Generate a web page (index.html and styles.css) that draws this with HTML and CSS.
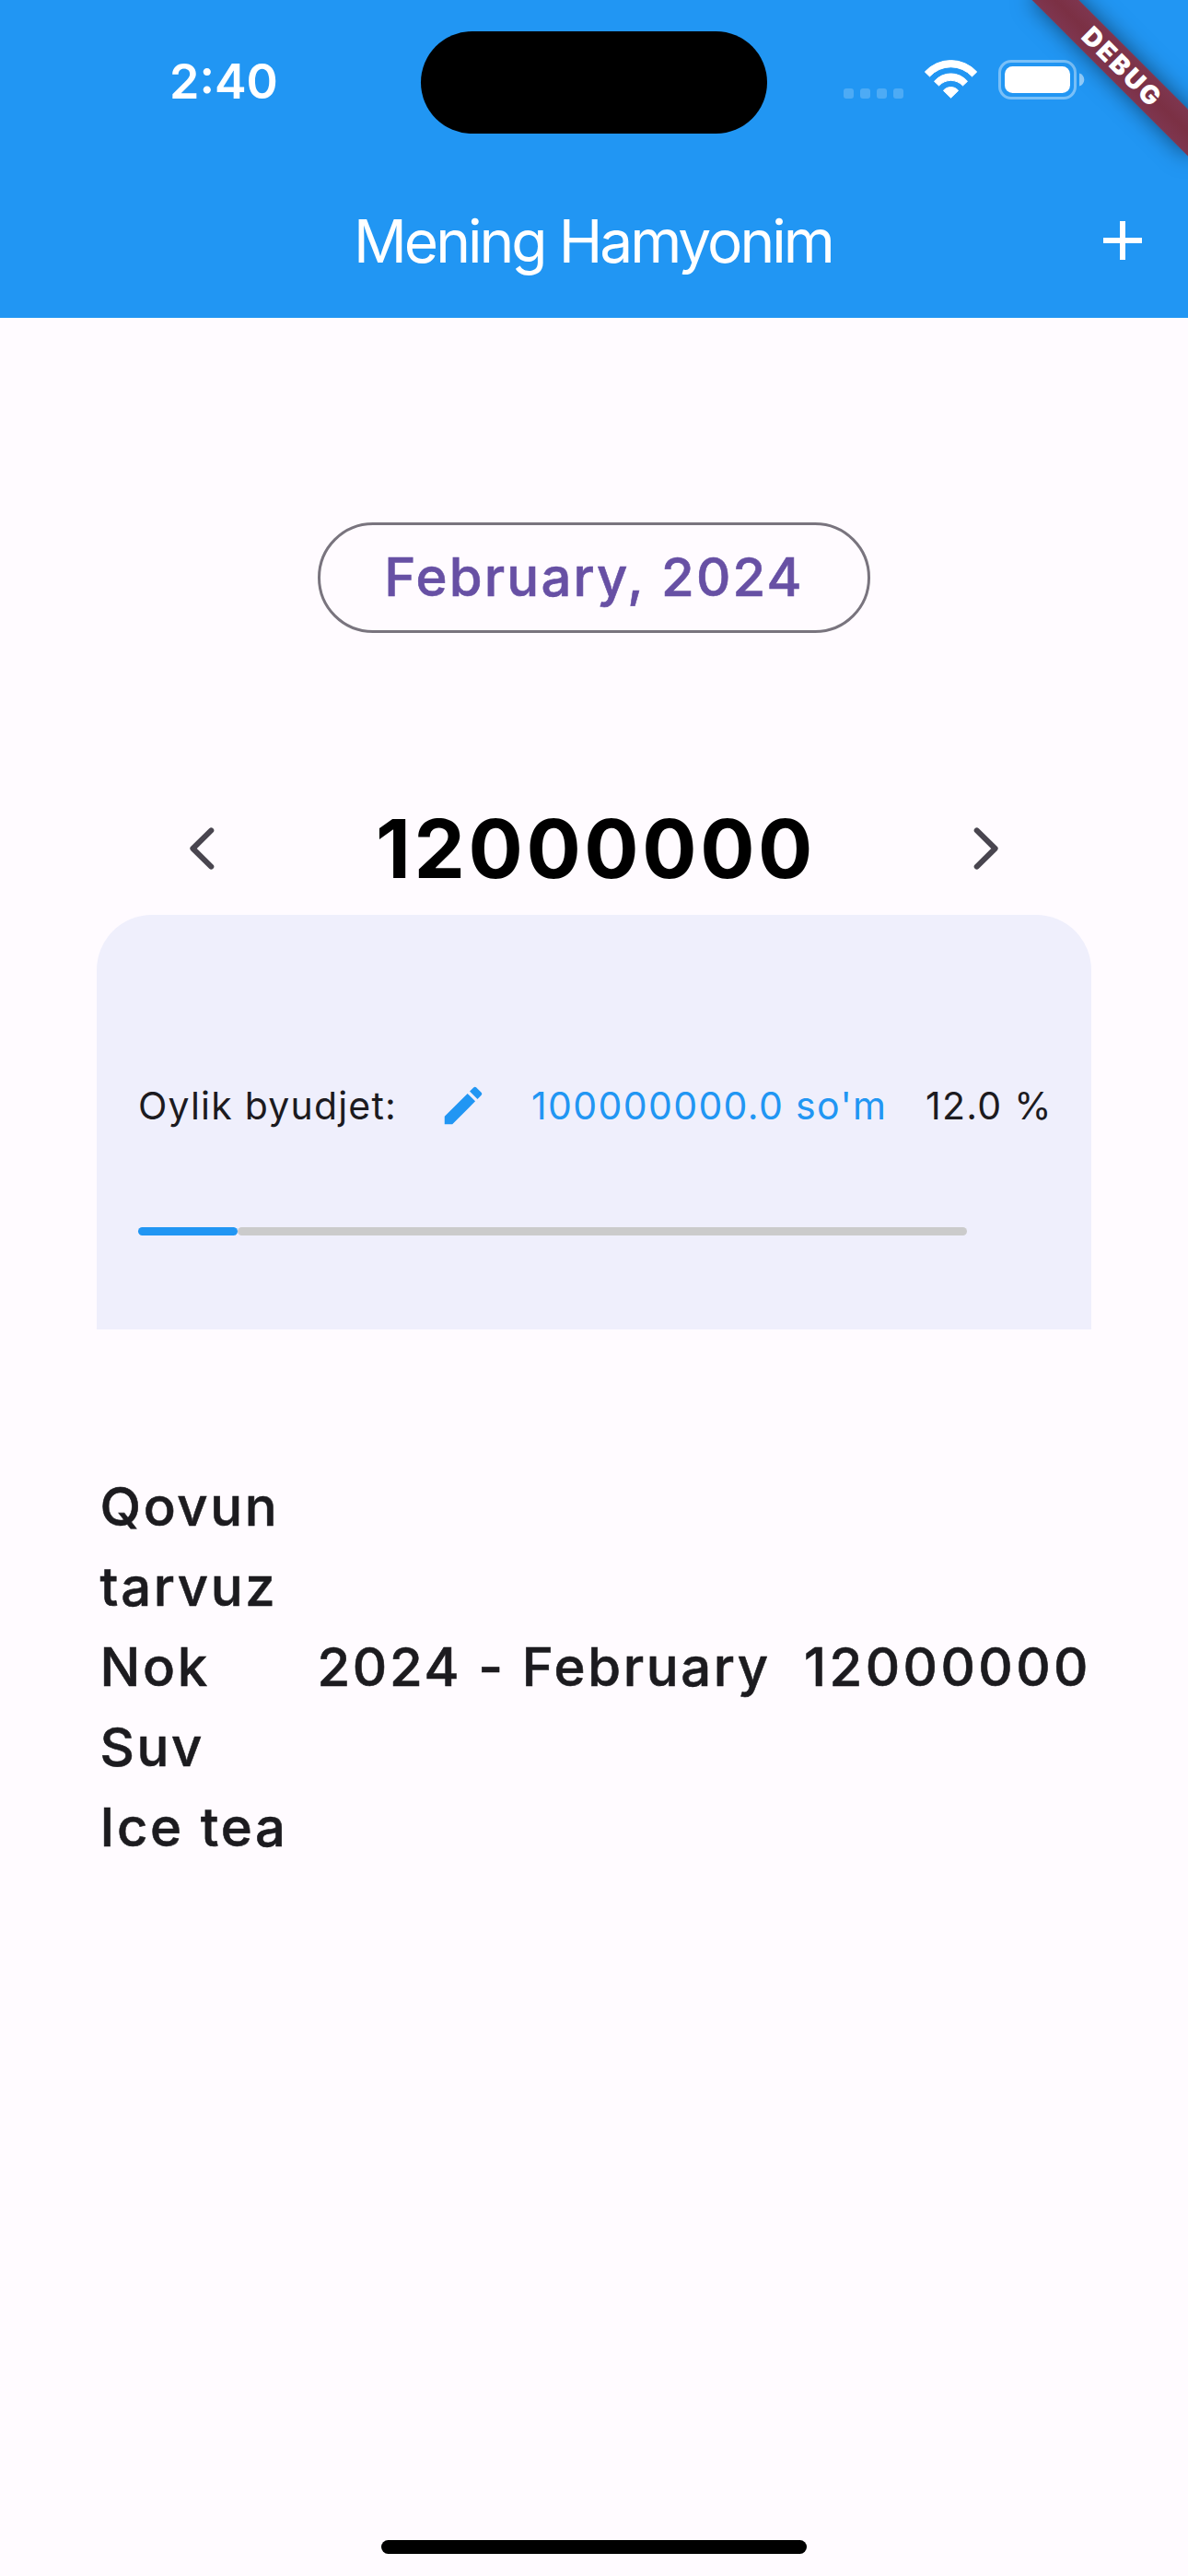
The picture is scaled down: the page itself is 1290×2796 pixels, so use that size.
FILE: index.html
```html
<!DOCTYPE html>
<html lang="uz">
<head>
<meta charset="utf-8">
<title>Mening Hamyonim</title>
<link rel="stylesheet" href="styles.css">
</head>
<body>
<div class="screen">
  <header class="header">
    <div class="status">
      <span class="time">2:40</span>
      <span class="island"></span>
      <span class="signal"><i></i><i></i><i></i><i></i></span>
      <svg class="wifi" width="60" height="44" viewBox="0 0 60 44" fill="#fff" stroke="#fff" stroke-width="1" stroke-linejoin="round">
        <path d="M1.3 14A38.2 38.2 0 0 1 57.7 14L52.5 19A31 31 0 0 0 6.5 19Z"/>
        <path d="M11.5 24.3A23.5 23.5 0 0 1 47.5 24.3L42.5 29A17.8 17.8 0 0 0 16.5 29Z"/>
        <path d="M21.4 34.3A10.6 10.6 0 0 1 37.6 34.3L29.5 42.2Z"/>
      </svg>
      <svg class="battery" width="94" height="43" viewBox="0 0 94 43">
        <rect x="1.5" y="1.5" width="82" height="40" rx="12.5" fill="none" stroke="#fff" stroke-opacity=".4" stroke-width="3"/>
        <rect x="7" y="7" width="71" height="29" rx="8.5" fill="#fff"/>
        <path d="M88 14.5C91.5 15.5 93.3 18.5 93.3 21.5S91.5 27.5 88 28.5Z" fill="#fff" fill-opacity=".5"/>
      </svg>
    </div>
    <div class="appbar">
      <h1 class="title">Mening Hamyonim</h1>
      <svg class="add" width="72" height="72" viewBox="0 0 24 24" fill="#fff"><path d="M19 13h-6v6h-2v-6H5v-2h6V5h2v6h6v2z"/></svg>
    </div>
    <div class="ribbon"><span>DEBUG</span></div>
  </header>

  <main class="main">
    <button class="month">February, 2024</button>

    <div class="total">
      <svg width="36" height="54" viewBox="0 0 36 54" class="chevron"><path d="M27.3 7.4L7.4 27L27.3 46.6"/></svg>
      <strong class="sum">12000000</strong>
      <svg width="36" height="54" viewBox="0 0 36 54" class="chevron"><path d="M8.7 7.4L28.6 27L8.7 46.6"/></svg>
    </div>

    <section class="card">
      <div class="budget">
        <span class="label">Oylik byudjet:</span>
        <svg class="edit" width="54" height="54" viewBox="0 0 24 24" fill="#2196f3"><path d="M3 17.25V21h3.75L17.81 9.94l-3.75-3.75L3 17.25zM20.71 7.04c.39-.39.39-1.02 0-1.41l-2.34-2.34c-.39-.39-1.02-.39-1.41 0l-1.83 1.83 3.75 3.75 1.83-1.83z"/></svg>
        <span class="limit">100000000.0 so'm</span>
        <span class="percent">12.0 %</span>
      </div>
      <div class="progress">
        <span class="spent" style="width:12%"></span>
        <span class="rest"></span>
      </div>
    </section>

    <div class="expense">
      <div class="items"><span>Qovun</span><span>tarvuz</span><span>Nok</span><span>Suv</span><span>Ice tea</span></div>
      <span class="date">2024 - February</span>
      <span class="cost">12000000</span>
    </div>
  </main>

  <div class="home"></div>
</div>
</body>
</html>
```
FILE: styles.css
```css
* { box-sizing: border-box; }

body {
  margin: 0;
  background: #fffbff;
  font-family: Inter, "Liberation Sans", sans-serif;
  color: #1c1b1f;
}

.screen {
  display: flex;
  flex-direction: column;
  width: 1290px;
  height: 2796px;
  overflow: hidden;
}

/* header */
.header {
  position: relative;
  height: 345px;
  background: #2196f3;
  color: #fff;
  overflow: hidden;
}

.status {
  display: flex;
  align-items: flex-start;
  height: 177px;
  padding-left: 184px;
}

.time {
  width: 273px;
  margin-top: 57px;
  font-size: 52px;
  font-weight: 600;
  line-height: 64px;
}

.island {
  width: 376px;
  height: 111px;
  margin-top: 33.5px;
  border-radius: 56px;
  background: #000;
}

.signal {
  display: flex;
  gap: 7px;
  margin: 96px 0 0 83px;
}

.signal i {
  width: 11px;
  height: 11px;
  border-radius: 3px;
  background: rgba(255, 255, 255, .2);
}

.wifi { margin: 64px 0 0 22px; }
.battery { margin: 65px 0 0 21px; }

.appbar {
  display: flex;
  align-items: center;
  height: 168px;
  padding: 0 35px 0 384px;
}

.title {
  flex: 1;
  margin: 0;
  padding-top: 2px;
  font-size: 64px;
  font-weight: 400;
  letter-spacing: -2.98px;
  line-height: 78px;
  white-space: nowrap;
}

.ribbon {
  position: absolute;
  top: 54px;
  left: 1098px;
  display: flex;
  justify-content: center;
  align-items: center;
  width: 240px;
  height: 36px;
  transform: rotate(45deg);
  background: linear-gradient(#7e364f, #7b3044 50%, #7e364f);
  box-shadow: 0 0 24px rgba(0, 0, 0, .5);
  font-size: 28px;
  font-weight: 900;
  letter-spacing: 2.5px;
  text-indent: 2px;
}

/* content */
.main {
  display: flex;
  flex-direction: column;
  align-items: center;
}

.month {
  width: 600px;
  height: 120px;
  margin: 222px 0 0;
  padding: 0 0 2px;
  border: 3px solid #79747e;
  border-radius: 60px;
  background: none;
  color: #6750a4;
  font: 500 58px Inter, "Liberation Sans", sans-serif;
  letter-spacing: 2.19px;
  -webkit-text-stroke: .6px currentColor;
}

.total {
  display: flex;
  align-items: center;
  justify-content: space-between;
  width: 886px;
  height: 144px;
  margin-top: 162px;
}

.chevron path {
  fill: none;
  stroke: #49454f;
  stroke-width: 6;
  stroke-linecap: round;
  stroke-linejoin: round;
}

.sum {
  padding-left: 4px;
  color: #000;
  font-size: 88px;
  font-weight: 700;
  letter-spacing: 3.56px;
}

.card {
  width: 1080px;
  height: 450px;
  padding: 180px 45px 0;
  border-radius: 60px 60px 0 0;
  background: #efeffc;
}

.budget {
  display: flex;
  align-items: center;
  height: 54px;
  font-size: 41px;
  white-space: nowrap;
}

.budget > * { flex: none; }
.label { width: 281px; letter-spacing: 1.2px; }
.edit { margin-left: 45px; }
.limit { width: 387px; margin-left: 47px; color: #2196f3; letter-spacing: 1.36px; }
.percent { margin-left: 41px; letter-spacing: 1.29px; }

.progress {
  display: flex;
  width: 900px;
  height: 9px;
  margin-top: 105px;
}

.progress span { border-radius: 4.5px; }
.spent { background: #2196f3; }
.rest { flex: 1; background: #cbcbcb; }

.expense {
  display: grid;
  grid-template-columns: 236px 528.5px auto;
  align-items: center;
  align-self: flex-start;
  margin: 149px 0 0 108.5px;
  font-size: 58px;
  font-weight: 500;
  line-height: 87px;
  letter-spacing: 2.63px;
  white-space: nowrap;
  -webkit-text-stroke: .6px currentColor;
}

.items { display: flex; flex-direction: column; }
.cost { letter-spacing: 3.43px; }

.home {
  width: 462px;
  height: 15px;
  margin: auto auto 24px;
  border-radius: 8px;
  background: #000;
}
```
